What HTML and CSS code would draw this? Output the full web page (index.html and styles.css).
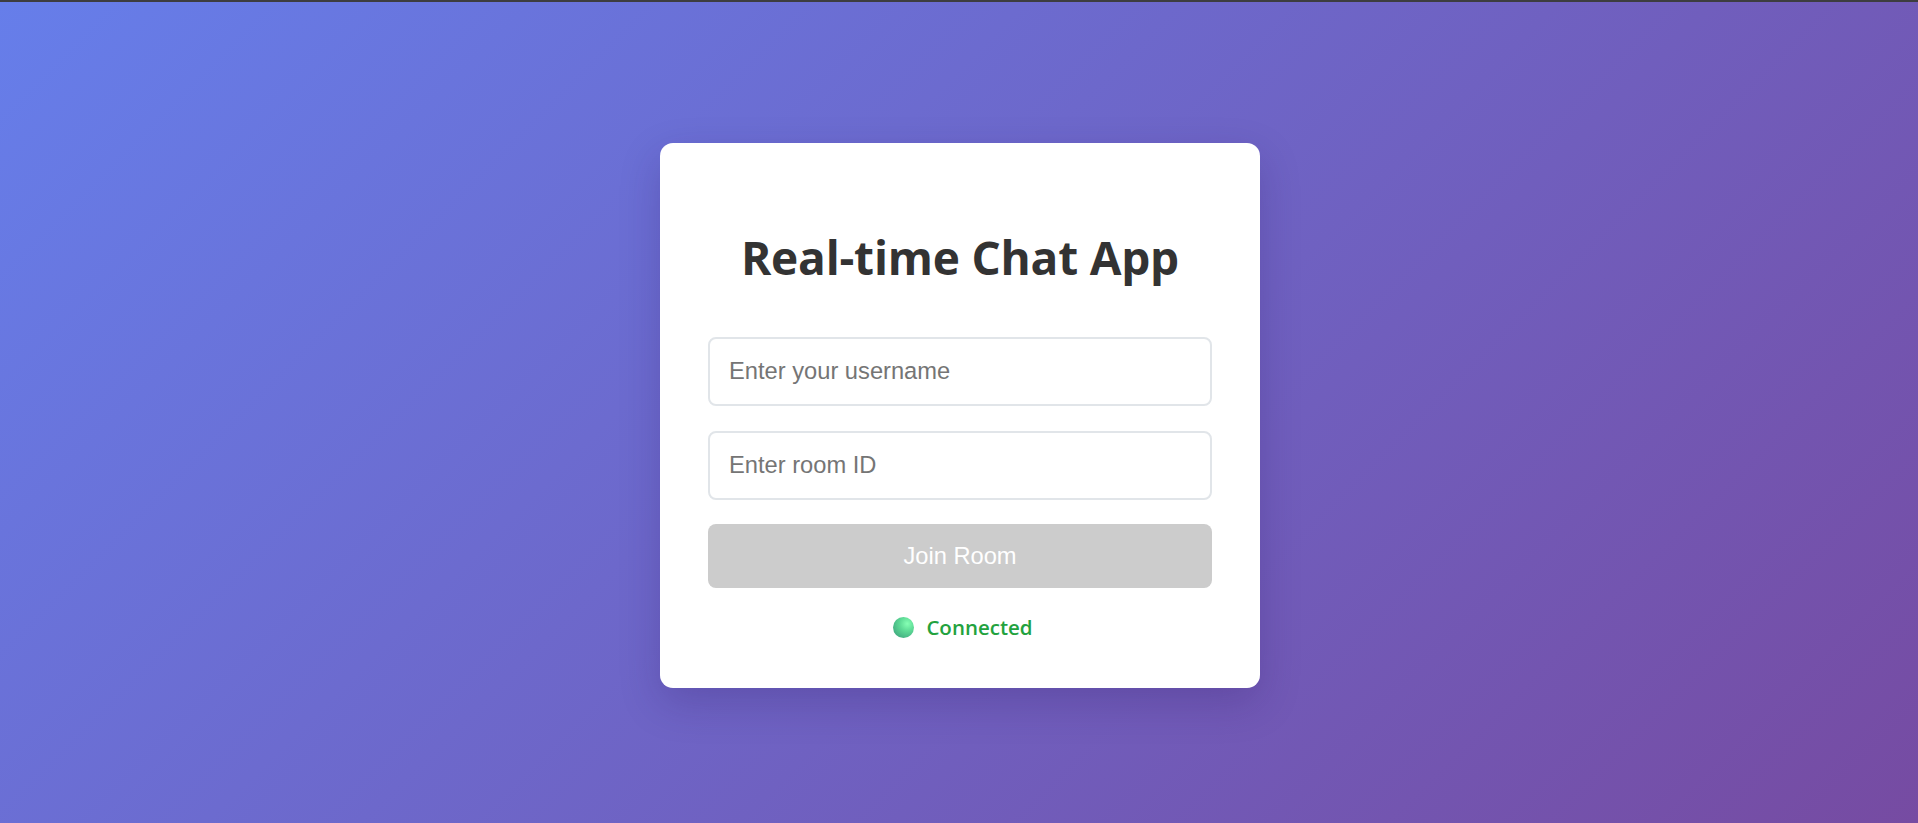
FILE: index.html
```html
<!DOCTYPE html>
<html lang="en">
<head>
<meta charset="utf-8">
<title>Real-time Chat App</title>
<link rel="stylesheet" href="styles.css">
</head>
<body>
<div class="topbar"></div>
<main class="stage">
  <section class="card">
    <h1 class="title">Real-time Chat App</h1>
    <input class="field" type="text" placeholder="Enter your username">
    <input class="field" type="text" placeholder="Enter room ID">
    <button class="join" type="button" disabled>Join Room</button>
    <div class="status">
      <span class="dot"></span>
      <span class="status-text">Connected</span>
    </div>
  </section>
</main>
</body>
</html>
```

FILE: styles.css
```css
* {
  box-sizing: border-box;
}

html, body {
  margin: 0;
  padding: 0;
  height: 100%;
}

body {
  background: linear-gradient(135deg, #667eea 0%, #764ba2 100%);
  font-family: "Liberation Sans", Arial, sans-serif;
  overflow: hidden;
}

.topbar {
  height: 2px;
  background: #3d3d40;
}

.stage {
  height: 821px;
  padding-top: 6px;
  display: flex;
  align-items: center;
  justify-content: center;
}

.card {
  width: 600px;
  height: 545px;
  background: #ffffff;
  border-radius: 13px;
  padding: 48px 48px 45px;
  box-shadow: 0 15px 40px rgba(40, 20, 90, 0.22);
  display: flex;
  flex-direction: column;
  margin-left: 2px;
}

.title {
  font-family: "Open Sans", "Noto Sans", sans-serif;
  font-weight: 700;
  font-size: 46px;
  line-height: 1.2;
  color: #333333;
  text-align: center;
  margin: 39px 0 52px;
  letter-spacing: -0.2px;
}

.field {
  display: block;
  width: 100%;
  height: 69px;
  border: 2px solid #e1e5e9;
  border-radius: 8px;
  padding: 0 19px;
  font-family: "Liberation Sans", Arial, sans-serif;
  font-size: 23.7px;
  color: #333;
  background: #fff;
  outline: none;
  margin: 0 0 25px;
}

.field::placeholder {
  color: #757575;
}

.field + .field {
  margin-bottom: 24px;
}

.join {
  display: block;
  width: 100%;
  height: 64px;
  border: none;
  border-radius: 8px;
  background: #cccccc;
  color: #ffffff;
  font-family: "Liberation Sans", Arial, sans-serif;
  font-size: 23.7px;
  padding: 0;
}

.status {
  margin-top: 24px;
  display: flex;
  align-items: center;
  justify-content: center;
  gap: 12px;
  height: 30px;
  padding-left: 6px;
}

.dot {
  width: 21px;
  height: 21px;
  border-radius: 50%;
  background: radial-gradient(circle at 68% 32%, #86ffb4 0%, #5fdc97 35%, #45b283 75%, #3f9a7e 100%);
}

.status-text {
  font-family: "Open Sans", "Noto Sans", sans-serif;
  font-weight: 600;
  font-size: 20.5px;
  line-height: 30px;
  color: #23a23e;
}
```
